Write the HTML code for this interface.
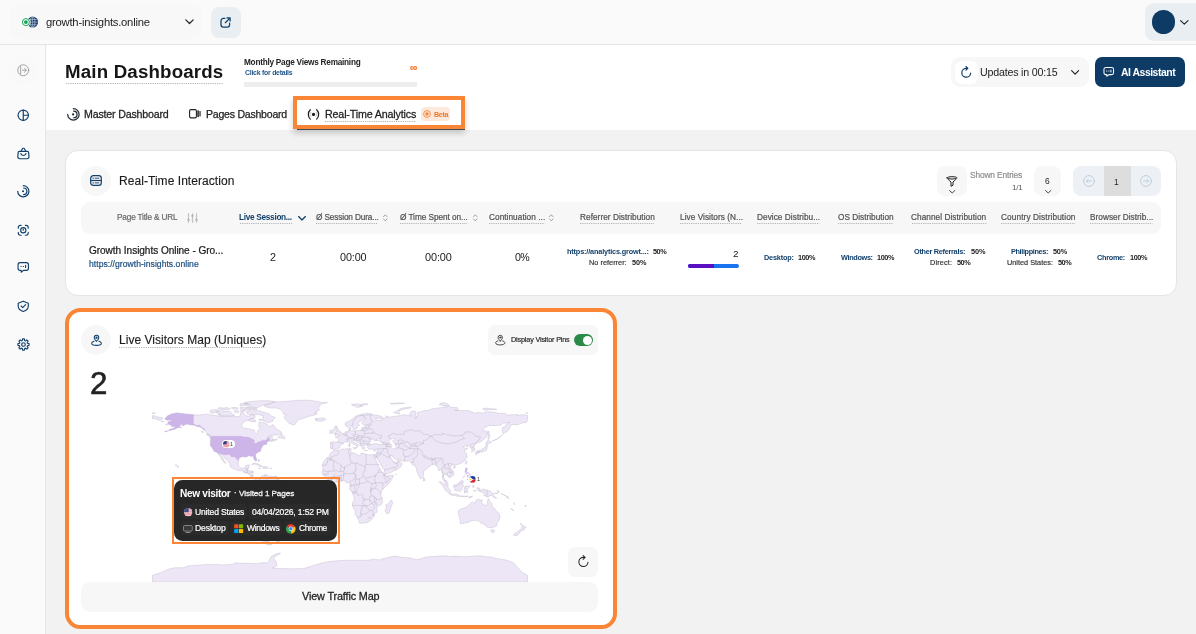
<!DOCTYPE html>
<html lang="en">
<head>
<meta charset="utf-8">
<title>Main Dashboards</title>
<style>
*{box-sizing:border-box;margin:0;padding:0}
html,body{width:1196px;height:634px;overflow:hidden;background:#f2f2f2;font-family:"Liberation Sans",sans-serif;color:#1f1f1f}
.a{position:absolute}
.t{position:absolute;white-space:nowrap;line-height:1;will-change:transform}
#topbar{left:0;top:0;width:1196px;height:44.800px;background:#fafafa;border-bottom:1px solid #e4e4e4}
#sidebar{left:0;top:44.800px;width:46px;height:590px;background:#fafafa;border-right:1px solid #e6e6e6}
#header{left:46px;top:44.800px;width:1150px;height:84.800px;background:#fff}
.card{background:#fff;border:1px solid #e5e5e5;border-radius:13px}
.circ{width:30px;height:30px;border-radius:50%;background:#f7f7f7}
.btn{border-radius:8px;background:#f7f7f7}
.dl{height:1px;background:repeating-linear-gradient(90deg,#b9b9b9 0 1.400px,transparent 1.400px 2.700px)}
svg{position:absolute;overflow:visible}
</style>
</head>
<body>
<div id="topbar" class="a"></div>
<div class="a" style="left:10px;top:5px;width:192px;height:34px;border-radius:9px;background:#f8f8f8"></div>
<svg style="left:20px;top:15px" width="20" height="14" viewBox="20 15 20 14">
<circle cx="32.650" cy="22.100" r="6.100" fill="#fff"/><circle cx="32.650" cy="22.100" r="5.500" fill="#1b4173"/>
<ellipse cx="32.650" cy="22.100" rx="2.300" ry="5.100" stroke="#dbe4ef" stroke-width=".55" fill="none"/>
<path d="M32.650 16.900v10.400M27.400 22.100h10.500M28.600 19.500h8.100M28.600 24.700h8.100" stroke="#dbe4ef" stroke-width=".5" fill="none"/>
<circle cx="25.900" cy="22.100" r="4.500" fill="#fff"/><circle cx="25.900" cy="22.100" r="3.500" fill="#fff" stroke="#12a150" stroke-width="1"/><circle cx="25.900" cy="22.100" r="1.900" fill="#12a150"/></svg>
<div class="t" id="site" style="left:45.95px;top:17.48px;font-size:11.25px;color:#222;letter-spacing:-0.231px">growth-insights.online</div>
<svg style="left:184.500px;top:19.300px" width="9" height="6" viewBox="0 0 9 6"><path d="M.8 .8l3.700 3.700L8.200 .8" stroke="#222" stroke-width="1.200" fill="none" stroke-linecap="round" stroke-linejoin="round"/></svg>
<div class="a" style="left:210.500px;top:7px;width:30.500px;height:30.500px;border-radius:8px;background:#e9eef2"></div>
<svg style="left:220px;top:16.500px" width="11" height="11" viewBox="0 0 11 11"><path d="M4.800 1.400H3.300A2.300 2.300 0 0 0 1 3.700v4A2.300 2.300 0 0 0 3.300 10h4A2.300 2.300 0 0 0 9.600 7.700V6.200M6.900 .9h3.200v3.200M9.900 1.100L5.300 5.700" stroke="#12406b" stroke-width="1.250" fill="none" stroke-linecap="round" stroke-linejoin="round"/></svg>
<div class="a" style="left:1144.500px;top:3px;width:60px;height:38px;border-radius:9px;background:#e9eef2"></div>
<div class="a" style="left:1151.500px;top:10.200px;width:23.500px;height:23.500px;border-radius:50%;background:#0d3b66"></div>
<svg style="left:1179.700px;top:19.700px" width="9" height="5" viewBox="0 0 9 5"><path d="M.6 .6l3.700 3.600L8 .6" stroke="#222" stroke-width="1.150" fill="none" stroke-linecap="round" stroke-linejoin="round"/></svg>
<div id="sidebar" class="a"></div>
<div id="header" class="a"></div>
<div class="a" style="left:8px;top:55px;width:30px;height:30px;border-radius:50%;background:#f9f9f9"></div>
<svg style="left:16.95px;top:63.95px" width="12.5" height="12.5" viewBox="0 0 24 24" fill="none" stroke="#9a9a9a" stroke-width="1.7" stroke-linecap="round" stroke-linejoin="round"><circle cx="12" cy="12" r="10.500"/><path d="M7 5v14"/><path d="M10.500 12h7M14.500 8.500L18 12l-3.500 3.500"/></svg>
<svg style="left:16.95px;top:108.65px" width="12.5" height="12.5" viewBox="0 0 24 24" fill="none" stroke="#12406b" stroke-width="2.3" stroke-linecap="round" stroke-linejoin="round"><circle cx="12" cy="12" r="10"/><path d="M12 2v20M12 12h10"/></svg>
<svg style="left:16.8px;top:146.6px" width="12.8" height="12.8" viewBox="0 0 24 24" fill="none" stroke="#12406b" stroke-width="2.2" stroke-linecap="round" stroke-linejoin="round"><path d="M4.500 8.200h15a2.300 2.300 0 0 1 2.300 2.300l.7 7.500a4 4 0 0 1-4 4h-13a4 4 0 0 1-4-4l.7-7.500a2.300 2.300 0 0 1 2.300-2.300z"/><path d="M7.500 8l3.200-5.700h2.600L16.500 8"/><path d="M7 12.300c1.200 2.400 2.900 3.600 5 3.600s3.800-1.200 5-3.600"/></svg>
<svg style="left:16.9px;top:185.1px" width="12.6" height="12.6" viewBox="0 0 24 24" fill="none" stroke="#12406b" stroke-width="2.3" stroke-linecap="round" stroke-linejoin="round"><path d="M12 1.300A10.700 10.700 0 1 1 1.300 12"/><path d="M12.500 5.700A6.300 6.300 0 0 1 12.500 18.300"/><circle cx="11.500" cy="12" r="2" fill="#12406b" stroke="none"/></svg>
<svg style="left:16.95px;top:223.55px" width="12.5" height="12.5" viewBox="0 0 24 24" fill="none" stroke="#12406b" stroke-width="2.2" stroke-linecap="round" stroke-linejoin="round"><path d="M2.500 8V6.500a4 4 0 0 1 4-4H8M16 2.500h1.500a4 4 0 0 1 4 4V8M21.500 16v1.500a4 4 0 0 1-4 4H16M8 21.500H6.500a4 4 0 0 1-4-4V16"/><circle cx="12" cy="12" r="5"/><path d="M12 9.500V12"/></svg>
<svg style="left:16.95px;top:261.45px" width="12.5" height="12.5" viewBox="0 0 24 24" fill="none" stroke="#12406b" stroke-width="2.2" stroke-linecap="round" stroke-linejoin="round"><path d="M6 3h12a4 4 0 0 1 4 4v7a4 4 0 0 1-4 4h-5.500L8 21.500V18H6a4 4 0 0 1-4-4V7a4 4 0 0 1 4-4z"/><path d="M7.500 10.500h.5M12 10.500h.5M16.500 8.500v4"/></svg>
<svg style="left:16.95px;top:299.75px" width="12.5" height="12.5" viewBox="0 0 24 24" fill="none" stroke="#12406b" stroke-width="2.2" stroke-linecap="round" stroke-linejoin="round"><path d="M12 2.300l9.700 3.900v5.300c0 5-3.700 8.800-9.700 10.500C6 20.300 2.300 16.500 2.300 11.500V6.200z"/><path d="M8 11.500l3 3 5.500-5.500"/></svg>
<svg style="left:16.7px;top:337.9px" width="13" height="13" viewBox="0 0 24 24" fill="none" stroke="#12406b" stroke-width="2.1" stroke-linecap="round" stroke-linejoin="round"><path d="M9.75 4.74L10.34 1.73L13.66 1.73L14.25 4.74L15.55 5.28L18.09 3.57L20.43 5.91L18.72 8.45L19.26 9.75L22.27 10.34L22.27 13.66L19.26 14.25L18.72 15.55L20.43 18.09L18.09 20.43L15.55 18.72L14.25 19.26L13.66 22.27L10.34 22.27L9.75 19.26L8.45 18.72L5.91 20.43L3.57 18.09L5.28 15.55L4.74 14.25L1.73 13.66L1.73 10.34L4.74 9.75L5.28 8.45L3.57 5.91L5.91 3.57L8.45 5.28Z"/><circle cx="12" cy="12" r="3.300"/></svg>
<div class="t" id="h1" style="left:65.17px;top:63.27px;font-size:18.7px;color:#161616;font-weight:700;letter-spacing:0.178px">Main Dashboards</div>
<svg style="left:65.5px;top:83px" width="157" height="1" viewBox="0 0 157 1"><path d="M0 .5H157" stroke="#b4b4b4" stroke-width="1" stroke-dasharray="1.200 1.020"/></svg>
<div class="t" id="mpv" style="left:243.81px;top:59.02px;font-size:8.24px;color:#222;font-weight:700;letter-spacing:-0.247px">Monthly Page Views Remaining</div>
<div class="t" id="cfd" style="left:245.03px;top:69.84px;font-size:6.92px;color:#23578a;font-weight:700;letter-spacing:-0.241px">Click for details</div>
<div class="t" id="inf" style="left:410.10px;top:61.71px;font-size:10.5px;color:#f5853f;font-weight:700;-webkit-text-stroke:.3px #f5853f">∞</div>
<div class="a" style="left:244.200px;top:82.300px;width:172.800px;height:4.800px;background:#eeeeee"></div>
<div class="a" style="left:951px;top:56.700px;width:138.200px;height:30.600px;border-radius:9px;background:#f7f7f7"></div>
<div class="a" style="left:955px;top:61px;width:23px;height:22.500px;border-radius:7px;background:#fff"></div>
<svg style="left:960.25px;top:65.75px" width="12.5" height="12.5" viewBox="0 0 24 24" fill="none" stroke="#12406b" stroke-width="2.3" stroke-linecap="round" stroke-linejoin="round"><path d="M20.500 13.500A8.500 8.500 0 1 1 12 4.500h2.500"/><path d="M11.500 1l3.500 3.500-3.500 3.500"/></svg>
<div class="t" id="upd" style="left:980.40px;top:66.58px;font-size:10.66px;color:#222;letter-spacing:-0.197px">Updates in 00:15</div>
<svg style="left:1070.600px;top:69.600px" width="9" height="5" viewBox="0 0 9 5"><path d="M.6 .6l3.500 3.500L7.600 .6" stroke="#222" stroke-width="1.150" fill="none" stroke-linecap="round" stroke-linejoin="round"/></svg>
<div class="a" style="left:1095.200px;top:56.700px;width:89.600px;height:30.600px;border-radius:7px;background:#0d3b66"></div>
<svg style="left:1102.65px;top:66.45px" width="11.5" height="11.5" viewBox="0 0 24 24" fill="none" stroke="#fff" stroke-width="2.1" stroke-linecap="round" stroke-linejoin="round"><path d="M6 3h12a4 4 0 0 1 4 4v7a4 4 0 0 1-4 4h-5.500L8 21.500V18H6a4 4 0 0 1-4-4V7a4 4 0 0 1 4-4z"/><path d="M7.500 10.500h.5M12 10.500h.5M16.500 8.500v4"/></svg>
<div class="t" id="ai" style="left:1120.60px;top:67.75px;font-size:10.45px;color:#fff;font-weight:700;letter-spacing:-0.482px">AI Assistant</div>
<svg style="left:66.9px;top:107.8px" width="12.8" height="12.8" viewBox="0 0 24 24" fill="none" stroke="#1d2730" stroke-width="2.3" stroke-linecap="round" stroke-linejoin="round"><path d="M12 1.300A10.700 10.700 0 1 1 1.300 12"/><path d="M12.500 5.700A6.300 6.300 0 0 1 12.500 18.300"/><circle cx="11.500" cy="12" r="2" fill="#222" stroke="none"/></svg>
<div class="t" id="tab1" style="left:83.80px;top:108.69px;font-size:10.64px;color:#222;-webkit-text-stroke:0.26px #222;letter-spacing:-0.178px">Master Dashboard</div>
<svg style="left:188.800px;top:109.300px" width="12" height="9.500" viewBox="0 0 12 9.500" fill="none" stroke="#222" stroke-width="1.100" stroke-linejoin="round"><rect x=".6" y=".6" width="6.800" height="8.300" rx="1.300"/><rect x="8.600" y="1.500" width="1.100" height="6.500" rx=".5" fill="#222" stroke-width=".5"/><rect x="10.800" y="2.300" width=".5" height="4.900" rx=".25" fill="#222" stroke-width=".5"/></svg>
<div class="t" id="tab2" style="left:205.85px;top:108.76px;font-size:10.56px;color:#222;-webkit-text-stroke:0.25px #222;letter-spacing:-0.234px">Pages Dashboard</div>
<div class="a" style="left:293px;top:96px;width:172px;height:32.800px;border:4px solid #f98535;background:#fff;box-shadow:0 4px 6px rgba(0,0,0,.2)"></div>
<div class="a" style="left:297px;top:128.800px;width:168px;height:1.100px;background:#414c55"></div>
<svg style="left:306.600px;top:108.900px" width="13.200" height="10.800" viewBox="0 0 13.200 10.800" fill="none" stroke-linecap="round"><circle cx="6.500" cy="5.400" r="1.550" fill="#151515"/><path d="M3.900 3.300a3.400 3.400 0 0 0 0 4.200M9.100 3.300a3.400 3.400 0 0 1 0 4.200" stroke="#c2c2c2" stroke-width=".9"/><path d="M3.300 .7a6.600 6.600 0 0 0 0 9.400M9.700 .7a6.600 6.600 0 0 1 0 9.400" stroke="#222" stroke-width="1.250"/></svg>
<div class="t" id="tab3" style="left:324.80px;top:108.64px;font-size:10.7px;color:#222;-webkit-text-stroke:0.26px #222;letter-spacing:-0.152px">Real-Time Analytics</div>
<svg style="left:325px;top:121.2px" width="90.6" height="1" viewBox="0 0 90.6 1"><path d="M0 .5H90.6" stroke="#b4b4b4" stroke-width="1" stroke-dasharray="1.200 1.020"/></svg>
<div class="a" style="left:420.800px;top:107px;width:29.700px;height:13.600px;border-radius:4px;background:#fde9db"></div>
<svg style="left:422.800px;top:110.200px" width="8" height="8" viewBox="0 0 8 8"><circle cx="4" cy="4" r="3.400" fill="none" stroke="#f5853f" stroke-width=".9"/><circle cx="4" cy="4" r="1.700" fill="#f5853f"/></svg>
<div class="t" id="beta" style="left:433.73px;top:111.83px;font-size:7.17px;color:#f07a2c;font-weight:700;letter-spacing:-0.303px">Beta</div>
<div class="a card" style="left:65px;top:150px;width:1112px;height:146px"></div>
<div class="a circ" style="left:81.400px;top:166px"></div>
<svg style="left:90.100px;top:174.900px" width="12" height="11" viewBox="0 0 12 11" fill="none" stroke="#12406b" stroke-width="1.200"><rect x=".7" y=".7" width="10.600" height="9.600" rx="2.600"/><path d="M.7 5.500h10.600"/><path d="M2.800 3.200h1M2.800 7.900h1M5.300 3.200h3.500M5.300 7.900h3.500" stroke-width=".9" stroke-linecap="round"/></svg>
<div class="t" id="c1t" style="left:118.50px;top:174.84px;font-size:12px;color:#1c1c1c;-webkit-text-stroke:0.14px #1c1c1c;letter-spacing:0.053px">Real-Time Interaction</div>
<div class="a btn" style="left:936.600px;top:166.200px;width:30.200px;height:30px"></div>
<svg style="left:946px;top:175.500px" width="12" height="11" viewBox="0 0 12 11" fill="none" stroke="#222" stroke-width="1" stroke-linejoin="round" stroke-linecap="round"><path d="M1 1.800C1 1.200 3.200 .7 6 .7s5 .5 5 1.100c0 .5-.6 1.200-4 4.200v3.200L5 10.300V6C1.600 3 1 2.300 1 1.800z"/><path d="M2.500 2.600c2 .6 5 .6 7 0"/></svg>
<svg style="left:948.800px;top:189.800px" width="6.400" height="3.600" viewBox="0 0 6.400 3.600"><path d="M.5 .5l2.700 2.500L5.900 .5" stroke="#333" stroke-width=".9" fill="none" stroke-linecap="round" stroke-linejoin="round"/></svg>
<div class="t" id="se" style="left:969.92px;top:171.21px;font-size:8.38px;color:#8f8f8f;-webkit-text-stroke:0.20px #8f8f8f;letter-spacing:-0.152px">Shown Entries</div>
<div class="t" id="se2" style="left:1012.20px;top:184.03px;font-size:8px;color:#555;letter-spacing:-0.224px">1/1</div>
<div class="a btn" style="left:1034.200px;top:166.200px;width:27px;height:30px"></div>
<div class="t" id="six" style="left:1044.89px;top:177.09px;font-size:8.4px;color:#222">6</div>
<svg style="left:1044.800px;top:189.800px" width="6.400" height="3.600" viewBox="0 0 6.400 3.600"><path d="M.5 .5l2.700 2.500L5.900 .5" stroke="#333" stroke-width=".9" fill="none" stroke-linecap="round" stroke-linejoin="round"/></svg>
<div class="a" style="left:1073px;top:166.200px;width:88.200px;height:30px;border-radius:8px;background:#edf1f5;overflow:hidden"><div class="a" style="left:31px;top:0;width:26.500px;height:30px;background:#dddddd"></div></div>
<svg style="left:1082.500px;top:175.200px" width="12" height="12" viewBox="0 0 12 12" fill="none" stroke="#b9c9d8" stroke-width=".9" stroke-linecap="round" stroke-linejoin="round"><circle cx="6" cy="6" r="5.400"/><path d="M8.500 6h-5M5.300 4.200L3.500 6l1.800 1.800"/></svg>
<svg style="left:1140.200px;top:175.200px" width="12" height="12" viewBox="0 0 12 12" fill="none" stroke="#b9c9d8" stroke-width=".9" stroke-linecap="round" stroke-linejoin="round"><circle cx="6" cy="6" r="5.400"/><path d="M3.500 6h5M6.700 4.200L8.500 6 6.700 7.800"/></svg>
<div class="t" id="pg1" style="left:1114.01px;top:178.49px;font-size:8.4px;color:#222">1</div>
<div class="a" style="left:81.300px;top:202px;width:1080px;height:31.800px;border-radius:9px;background:#f7f7f7"></div>
<div class="t" id="h_pt" style="left:117.10px;top:213.52px;font-size:8.25px;color:#6a6a6a;-webkit-text-stroke:0.20px #6a6a6a;letter-spacing:-0.178px">Page Title &amp; URL</div>
<svg style="left:186.600px;top:213px" width="11" height="10" viewBox="0 0 11 10" stroke="#c2c2c2" stroke-width="1.150" fill="none"><path d="M1.500 .3v9.400M5.500 .3v9.400M9.500 .3v9.400"/><path d="M.2 6.800h2.600M4.200 2.800h2.600M8.200 6.800h2.600" stroke="#b0b0b0" stroke-width="1.200"/></svg>
<div class="t" id="h_ls" style="left:239.29px;top:213.52px;font-size:8.25px;color:#12406b;font-weight:700;letter-spacing:-0.298px">Live Session...</div>
<svg style="left:239.8px;top:223.200px" width="52.2" height="1" viewBox="0 0 52.2 1"><path d="M0 .5H52.2" stroke="#b4b4b4" stroke-width="1" stroke-dasharray="1.200 1.020"/></svg>
<svg style="left:298.200px;top:215.600px" width="8" height="4.600" viewBox="0 0 8 4.600"><path d="M.6 .6l3.400 3.300L7.400 .6" stroke="#12406b" stroke-width="1.350" fill="none" stroke-linecap="round" stroke-linejoin="round"/></svg>
<div class="t" id="h_sd" style="left:315.93px;top:213.52px;font-size:8.25px;color:#505050;-webkit-text-stroke:0.20px #505050;letter-spacing:-0.142px">Ø Session Dura...</div>
<svg style="left:316.3px;top:223.200px" width="62.2" height="1" viewBox="0 0 62.2 1"><path d="M0 .5H62.2" stroke="#b4b4b4" stroke-width="1" stroke-dasharray="1.200 1.020"/></svg>
<svg style="left:383.4px;top:213.800px" width="4.600" height="7.600" viewBox="0 0 4.600 7.600"><path d="M.5 2.700L2.300 .8l1.800 1.900M.5 4.900l1.800 1.900 1.800-1.900" stroke="#7a7a7a" stroke-width=".7" fill="none" stroke-linecap="round" stroke-linejoin="round"/></svg>
<div class="t" id="h_ts" style="left:399.51px;top:213.52px;font-size:8.25px;color:#505050;-webkit-text-stroke:0.20px #505050;letter-spacing:-0.060px">Ø Time Spent on...</div>
<svg style="left:399.6px;top:223.200px" width="67.2" height="1" viewBox="0 0 67.2 1"><path d="M0 .5H67.2" stroke="#b4b4b4" stroke-width="1" stroke-dasharray="1.200 1.020"/></svg>
<svg style="left:472.9px;top:213.800px" width="4.600" height="7.600" viewBox="0 0 4.600 7.600"><path d="M.5 2.700L2.300 .8l1.800 1.900M.5 4.900l1.800 1.900 1.800-1.900" stroke="#7a7a7a" stroke-width=".7" fill="none" stroke-linecap="round" stroke-linejoin="round"/></svg>
<div class="t" id="h_co" style="left:489.13px;top:213.52px;font-size:8.25px;color:#505050;-webkit-text-stroke:0.20px #505050;letter-spacing:0.045px">Continuation ...</div>
<svg style="left:488.9px;top:223.200px" width="55.6" height="1" viewBox="0 0 55.6 1"><path d="M0 .5H55.6" stroke="#b4b4b4" stroke-width="1" stroke-dasharray="1.200 1.020"/></svg>
<svg style="left:549.2px;top:213.800px" width="4.600" height="7.600" viewBox="0 0 4.600 7.600"><path d="M.5 2.700L2.300 .8l1.800 1.900M.5 4.900l1.800 1.900 1.800-1.900" stroke="#7a7a7a" stroke-width=".7" fill="none" stroke-linecap="round" stroke-linejoin="round"/></svg>
<div class="t" id="h_rd" style="left:579.65px;top:213.52px;font-size:8.25px;color:#505050;-webkit-text-stroke:0.20px #505050;letter-spacing:0.046px">Referrer Distribution</div>
<svg style="left:579.6px;top:223.200px" width="74" height="1" viewBox="0 0 74 1"><path d="M0 .5H74" stroke="#b4b4b4" stroke-width="1" stroke-dasharray="1.200 1.020"/></svg>
<div class="t" id="h_lv" style="left:680.44px;top:213.52px;font-size:8.25px;color:#505050;-webkit-text-stroke:0.20px #505050;letter-spacing:0.047px">Live Visitors (N...</div>
<svg style="left:680.4px;top:223.200px" width="62.2" height="1" viewBox="0 0 62.2 1"><path d="M0 .5H62.2" stroke="#b4b4b4" stroke-width="1" stroke-dasharray="1.200 1.020"/></svg>
<div class="t" id="h_dd" style="left:756.61px;top:213.52px;font-size:8.25px;color:#505050;-webkit-text-stroke:0.20px #505050;letter-spacing:0.045px">Device Distribu...</div>
<svg style="left:757.2px;top:223.200px" width="62.4" height="1" viewBox="0 0 62.4 1"><path d="M0 .5H62.4" stroke="#b4b4b4" stroke-width="1" stroke-dasharray="1.200 1.020"/></svg>
<div class="t" id="h_os" style="left:837.96px;top:213.52px;font-size:8.25px;color:#505050;-webkit-text-stroke:0.20px #505050;letter-spacing:0.011px">OS Distribution</div>
<svg style="left:838.1px;top:223.200px" width="55.4" height="1" viewBox="0 0 55.4 1"><path d="M0 .5H55.4" stroke="#b4b4b4" stroke-width="1" stroke-dasharray="1.200 1.020"/></svg>
<div class="t" id="h_ch" style="left:911.08px;top:213.52px;font-size:8.25px;color:#505050;-webkit-text-stroke:0.20px #505050;letter-spacing:0.045px">Channel Distribution</div>
<svg style="left:911.5px;top:223.200px" width="74.8" height="1" viewBox="0 0 74.8 1"><path d="M0 .5H74.8" stroke="#b4b4b4" stroke-width="1" stroke-dasharray="1.200 1.020"/></svg>
<div class="t" id="h_cd" style="left:1000.96px;top:213.52px;font-size:8.25px;color:#505050;-webkit-text-stroke:0.20px #505050;letter-spacing:0.106px">Country Distribution</div>
<svg style="left:1001.3px;top:223.200px" width="74" height="1" viewBox="0 0 74 1"><path d="M0 .5H74" stroke="#b4b4b4" stroke-width="1" stroke-dasharray="1.200 1.020"/></svg>
<div class="t" id="h_bd" style="left:1089.59px;top:213.52px;font-size:8.25px;color:#505050;-webkit-text-stroke:0.20px #505050;letter-spacing:0.026px">Browser Distrib...</div>
<svg style="left:1089.6px;top:223.200px" width="62.4" height="1" viewBox="0 0 62.4 1"><path d="M0 .5H62.4" stroke="#b4b4b4" stroke-width="1" stroke-dasharray="1.200 1.020"/></svg>
<div class="t" id="d_t" style="left:88.92px;top:246.38px;font-size:10.07px;color:#1c1c1c;-webkit-text-stroke:0.24px #1c1c1c;letter-spacing:-0.051px">Growth Insights Online - Gro...</div>
<div class="t" id="d_u" style="left:88.87px;top:259.93px;font-size:8.59px;color:#1d4f80;-webkit-text-stroke:0.21px #1d4f80;letter-spacing:0.033px">https://growth-insights.online</div>
<div class="t" id="d_2" style="left:270.11px;top:251.86px;font-size:10.8px;color:#222">2</div>
<div class="t" id="d_a" style="left:339.69px;top:251.82px;font-size:10.84px;color:#222;letter-spacing:-0.113px">00:00</div>
<div class="t" id="d_b" style="left:425.19px;top:251.79px;font-size:10.88px;color:#222;letter-spacing:-0.093px">00:00</div>
<div class="t" id="d_c" style="left:515.25px;top:252.03px;font-size:10.6px;color:#222;letter-spacing:-0.550px">0%</div>
<div class="t" id="r1l" style="left:567.47px;top:248.22px;font-size:7.3px;color:#12406b;font-weight:700;letter-spacing:-0.158px">https://analytics.growt...:</div>
<div class="t" id="r1v" style="left:653.25px;top:248.22px;font-size:7.3px;color:#222;font-weight:700;letter-spacing:-0.467px">50%</div>
<div class="t" id="r2l" style="left:588.95px;top:259.12px;font-size:7.3px;color:#333;-webkit-text-stroke:0.18px #333;letter-spacing:0.029px">No referrer:</div>
<div class="t" id="r2v" style="left:632.07px;top:259.12px;font-size:7.3px;color:#222;font-weight:700;letter-spacing:-0.110px">50%</div>
<div class="t" id="lv2" style="left:733.23px;top:248.82px;font-size:9.9px;color:#222">2</div>
<div class="a" style="left:688px;top:264px;width:51px;height:4px;border-radius:2px;background:#1a73f0;overflow:hidden"><div class="a" style="left:0;top:0;width:25.800px;height:4px;background:#5a10c2"></div></div>
<div class="t" id="dvl" style="left:763.67px;top:253.52px;font-size:7.3px;color:#12406b;font-weight:700;letter-spacing:-0.189px">Desktop:</div>
<div class="t" id="dvv" style="left:798.18px;top:253.52px;font-size:7.3px;color:#222;font-weight:700;letter-spacing:-0.378px">100%</div>
<div class="t" id="osl" style="left:840.50px;top:253.52px;font-size:7.3px;color:#12406b;font-weight:700;letter-spacing:-0.334px">Windows:</div>
<div class="t" id="osv" style="left:876.68px;top:253.52px;font-size:7.3px;color:#222;font-weight:700;letter-spacing:-0.378px">100%</div>
<div class="t" id="c1l" style="left:914.34px;top:248.22px;font-size:7.3px;color:#12406b;font-weight:700;letter-spacing:-0.281px">Other Referrals:</div>
<div class="t" id="c1v" style="left:971.07px;top:248.22px;font-size:7.3px;color:#222;font-weight:700;letter-spacing:-0.058px">50%</div>
<div class="t" id="c2l" style="left:929.56px;top:259.12px;font-size:7.3px;color:#333;-webkit-text-stroke:0.18px #333;letter-spacing:0.157px">Direct:</div>
<div class="t" id="c2v" style="left:956.62px;top:259.12px;font-size:7.3px;color:#222;font-weight:700;letter-spacing:-0.481px">50%</div>
<div class="t" id="k1l" style="left:1011.11px;top:248.22px;font-size:7.3px;color:#12406b;font-weight:700;letter-spacing:-0.359px">Philippines:</div>
<div class="t" id="k1v" style="left:1053.18px;top:248.22px;font-size:7.3px;color:#222;font-weight:700;letter-spacing:-0.188px">50%</div>
<div class="t" id="k2l" style="left:1007.33px;top:259.12px;font-size:7.3px;color:#333;-webkit-text-stroke:0.18px #333;letter-spacing:0.010px">United States:</div>
<div class="t" id="k2v" style="left:1057.62px;top:259.12px;font-size:7.3px;color:#222;font-weight:700;letter-spacing:-0.481px">50%</div>
<div class="t" id="brl" style="left:1097.35px;top:253.52px;font-size:7.3px;color:#12406b;font-weight:700;letter-spacing:-0.287px">Chrome:</div>
<div class="t" id="brv" style="left:1130.18px;top:253.52px;font-size:7.3px;color:#222;font-weight:700;letter-spacing:-0.401px">100%</div>
<div class="a" style="left:65px;top:308px;width:552.300px;height:321px;border:4px solid #f98535;border-radius:15.500px;background:#fff"></div>
<div class="a circ" style="left:81.400px;top:325.100px"></div>
<svg style="left:89.9px;top:333.6px" width="13" height="13" viewBox="0 0 24 24" fill="none" stroke="#12406b" stroke-width="1.9" stroke-linecap="round" stroke-linejoin="round"><path d="M12 13.500c2.800-2.700 4.200-4.900 4.200-6.800A4.200 4.200 0 0 0 7.800 6.700c0 1.900 1.400 4.100 4.200 6.800z"/><circle cx="12" cy="6.800" r="1.200"/><path d="M7.500 13.300C4.800 14 3 15.300 3 16.900 3 19.200 7 21 12 21s9-1.800 9-4.100c0-1.600-1.800-2.900-4.500-3.600"/></svg>
<div class="t" id="c2t" style="left:118.50px;top:333.54px;font-size:12px;color:#1c1c1c;-webkit-text-stroke:0.14px #1c1c1c;letter-spacing:0.030px">Live Visitors Map (Uniques)</div>
<svg style="left:119.4px;top:346.6px" width="145.8" height="1" viewBox="0 0 145.8 1"><path d="M0 .5H145.8" stroke="#b4b4b4" stroke-width="1" stroke-dasharray="1.200 1.020"/></svg>
<div class="a" style="left:488.200px;top:325.100px;width:110.300px;height:30px;border-radius:7px;background:#f7f7f7"></div>
<svg style="left:493.65px;top:333.75px" width="12.5" height="12.5" viewBox="0 0 24 24" fill="none" stroke="#333" stroke-width="1.7" stroke-linecap="round" stroke-linejoin="round"><path d="M12 13.500c2.800-2.700 4.200-4.900 4.200-6.800A4.200 4.200 0 0 0 7.800 6.700c0 1.900 1.400 4.100 4.200 6.800z"/><circle cx="12" cy="6.800" r="1.200"/><path d="M7.500 13.300C4.800 14 3 15.300 3 16.900 3 19.200 7 21 12 21s9-1.800 9-4.100c0-1.600-1.800-2.900-4.500-3.600"/></svg>
<div class="t" id="dvp" style="left:511.06px;top:336.28px;font-size:7.23px;color:#222;-webkit-text-stroke:0.17px #222;letter-spacing:-0.155px">Display Visitor Pins</div>
<div class="a" style="left:573.800px;top:334.300px;width:19.400px;height:11.600px;border-radius:6px;background:#2a8a47"><div class="a" style="left:9px;top:1.300px;width:9px;height:9px;border-radius:50%;background:#fff"></div></div>
<div class="t" id="big2" style="left:89.74px;top:367.50px;font-size:31.3px;color:#222;-webkit-text-stroke:.6px #222">2</div>
<svg class="map" style="left:151.5px;top:398.5px;overflow:hidden" width="376" height="183.5" viewBox="0 0 376 183.5"><path d="M13 20.1L15.1 17.2L19.2 15.2L25 14.0L31.7 14.9L41.1 15.8L47.4 16.1L54.7 15.2L58.8 16.0L68.2 17.3L75.5 17.5L82.8 17.7L88 17.3L88.5 13.8L91.1 13.5L93.7 16.4L96.3 17.3L99.5 15.7L103.1 16.6L102.6 19.2L98.4 19.5L96.9 21.4L93.2 22.2L90.1 24.8L89.5 27.0L91.6 28.9L96.3 29.7L99.5 30.7L102.4 30.9L102.3 33.1L104.1 34.9L105.7 34.3L105.7 31.5L108 29.4L106.4 27.2L107.3 25.3L106.7 23.3L110.9 23.4L114.6 24.8L115.6 26.8L117.7 27.6L119.8 26.3L120.8 25.5L122.9 27.9L125 30.5L128.1 32.0L129.9 33.8L127.1 35.0L125.5 36.0L119.2 36.0L115.6 38.5L118.2 37.3L120.8 37.3L119.8 38.5L120.8 40.1L123.9 40.6L125.5 39.5L124.5 41.1L121.3 42.0L119.2 42.9L119.5 41.6L120.8 40.9L118.2 41.4L116.1 42.3L114.6 43.2L114.2 44.5L115.1 44.9L113.5 45.2L110.9 46.0L110.6 47.2L109.4 48.7L108.8 49.8L109 51.3L107.8 52.4L106.2 53.1L103.8 54.8L103.2 56.5L104.1 59.1L104.7 60.7L104.1 62.0L102.8 61.2L101.7 59.3L101.9 58.1L100.5 57.0L98.9 57.3L97.4 56.6L95.3 56.7L95 57.9L93.2 57.8L90.3 57.4L89 57.9L86.7 59.3L86.7 61.4L86.1 64.9L86.7 66.9L88 68.5L89.6 69.3L92.2 68.9L93.5 68.0L93.9 66.4L97.4 65.9L96.9 68.0L96.3 69.5L95.5 71.7L98.4 71.8L101.3 72.7L100.8 75.3L100.8 76.8L102.1 78.7L103.6 79.1L105.2 78.3L107.4 79.3L107 80.7L106.2 79.7L104.9 79.4L104.4 80.7L102.8 80.2L101.5 79.7L100.8 78.9L98.6 77.9L98.6 76.6L96.9 74.8L95.8 74.5L92.7 73.7L90.1 71.5L87.5 71.9L83.8 70.6L80.2 69.2L78.1 67.5L78.1 64.9L75.5 61.7L73.4 59.9L70.8 57.3L70.1 55.7L68.4 55.2L68.6 57.0L70.5 59.1L71.9 61.2L73.1 63.1L73.9 64.2L73.2 64.3L71.1 62.5L71.1 61.0L69 60.0L69.2 58.6L67.4 56.8L66 54.4L64.6 52.9L62.5 52.4L61.1 50.3L60.4 48.9L59 47.2L58.5 46.2L58.6 44.0L58.8 40.2L58.1 37.9L60.4 38.8L60.1 37.3L58 36.2L55.2 35.2L54.1 33.1L52.4 31.4L51 30.0L48.9 28.1L46.8 27.4L44.8 27.2L42.2 26.0L38 25.7L35.9 24.9L33.3 25.3L32.3 26.1L30.2 26.5L31.2 24.8L29.1 25.3L28.1 26.5L27.1 27.9L25 28.9L22.9 30.0L20.3 30.7L16.6 31.5L18.7 30.2L21.3 29.4L23.9 27.9L24.1 27.0L22.4 27.4L19.5 27.2L19.2 25.8L16.6 25.3L15.6 24.2L16.6 22.7L20.3 22.0L20.3 21.1L18.2 21.0L14.6 21.0L13 20.1Z M107.4 79.3L108.8 78.4L109.4 77.0L110.9 76.6L112.5 76.0L113.5 75.4L113.7 76.8L115.1 76.0L116.9 77.2L119.2 77.3L121.3 77.6L123.4 77.2L125 78.9L126.5 80.0L128.6 82.0L131.7 82.3L134.4 83.6L135.9 86.4L135.4 88.3L137.5 88.8L138 89.3L141.6 91.2L144.8 91.3L147.4 91.9L149.5 93.3L151.2 93.8L151.7 96.1L151 98.2L149.1 100.3L147.6 101.8L147.4 104.4L147.2 106.8L146.3 109.1L145.3 111.2L144.2 112.3L141.6 112.6L139.6 113.6L137.7 115.2L137.3 118.0L135.6 120.1L133.6 121.8L132.3 123.7L130.7 124.7L129.1 124.6L127.2 123.7L128.4 125.3L128.6 126.6L127.6 128.4L123.4 128.9L123.1 131.0L120.3 131.0L121.6 132.6L120 133.6L119.8 135.2L117.7 136.5L119.5 138.1L117.7 139.9L116.1 141.4L116.7 142.9L117 143.8L120.1 145.3L118.2 145.9L115.6 145.8L113 144.6L110.4 142.5L109.4 138.8L110.4 136.2L112 132.1L111.1 129.4L111.4 126.8L112.5 124.8L113.5 122.7L113.5 118.5L114.6 114.3L114.9 109.1L114.7 107.4L113 106.0L110.4 104.7L108.6 102.9L107.6 100.8L106.4 98.7L105.7 96.6L104.1 95.1L103.3 94.0L103.3 92.8L104.7 91.7L103.7 90.6L104.1 88.8L104.7 87.8L105.8 86.7L106.5 85.5L107.5 84.1L107.3 82.6L107.3 81.0L107.4 79.3Z M181.9 51.0L184.9 51.5L185.9 51.6L188 50.9L189 50.3L191.1 49.9L193.2 50.0L196.3 49.8L198.4 49.4L199.5 50.0L198.9 51.3L198.6 52.9L199.7 53.7L201.5 54.0L203.6 54.7L205.7 56.0L207.8 56.7L208.8 56.0L209 54.4L210.6 54.0L212 54.3L214 55.4L216.6 55.8L218.2 56.1L220.3 55.5L221.6 55.7L222 57.0L223 59.1L223.9 61.2L225 63.3L226.3 65.4L226.8 66.4L226.9 68.7L228.1 69.5L229.1 72.2L230.7 73.2L232.8 75.2L233.1 76.3L233.8 77.4L237 76.6L239 76.5L241.3 76.0L240.9 78.4L239.4 81.0L238 83.1L235.9 85.7L233.3 87.8L232.3 88.8L230.7 90.4L229.9 91.4L229.1 93.2L228.4 95.1L229.1 97.2L230.2 99.2L230.3 101.3L230.3 103.4L229.5 105.3L227.1 106.5L224.5 109.1L225 111.2L225 113.1L222.4 114.9L222.2 117.5L220.3 119.6L218.7 121.1L217.2 122.7L214.6 123.7L211.4 123.9L208.8 124.6L207.2 123.9L206.8 121.6L205.2 118.1L203.6 115.9L203.1 111.7L201.8 109.7L200.5 107.1L200.3 105.0L201 102.9L202.1 101.3L202.3 99.2L201.8 97.7L200.7 94.6L200.3 93.0L198.4 91.2L197.7 89.9L197.9 87.3L198.1 84.3L196.9 83.6L195.3 83.7L194.3 83.8L192.7 81.7L190.6 81.7L189 82.3L185.9 83.3L183.8 82.9L180.2 83.7L178.6 83.1L176.7 81.5L175 80.5L174.1 79.4L173.7 78.4L172.4 76.8L170.5 75.3L170.6 74.2L169.8 73.0L170.8 71.6L171 70.1L170.8 68.0L170.3 66.4L171.3 63.6L172.9 61.0L174.5 59.3L176.3 58.3L177.6 57.6L177.8 55.5L179.1 53.6L180.9 52.9L181.9 51Z M239.4 100.8L240.3 102.9L240.6 104.4L239.6 106.5L238.5 109.7L237.1 114.2L235.1 114.9L233.5 112.8L233.1 110.7L234.4 108.6L233.8 106.0L236.4 104.7L238 102.4Z M182.2 50.8L181.4 50.1L180.3 49.5L178.7 49.8L178.8 48.4L178.1 48.0L178.8 45.6L178.4 43.5L179.7 42.8L183.8 43.1L186.1 43.1L186.7 41.7L186.7 40.4L185.7 39.1L183.1 38.0L184.9 37.5L186.3 37.7L186.1 36.5L188.2 36.7L189.6 36.0L190.6 35.1L191.6 34.7L192.7 33.6L193.2 32.8L195.3 32.6L196.9 32.0L197 30.5L196.5 28.9L198.9 28.2L198.9 29.8L198.2 31.0L199.3 32.0L201 31.6L202.8 32.2L204.7 31.7L207.3 31.3L208.6 31.6L209.9 30.8L209.9 28.9L210.9 28.2L213.2 28.7L213.3 27.6L212.5 26.6L214 26.3L217.2 26.2L219.5 25.9L217.7 25.3L214 25.6L211.4 25.8L210.2 24.8L210.4 22.7L213.5 20.8L214.4 20.0L213 19.8L210.9 20.1L210.2 21.3L207.8 22.5L206 24.0L205.9 25.1L207.6 26.0L207 26.6L205.3 27.4L205.1 29.2L204.4 29.9L202.9 30.4L201.4 30.6L201.2 29.8L200.3 28.2L199.7 26.8L199 26.2L197.9 26.9L195.3 27.9L193.7 26.8L193.2 24.8L193.4 23.5L196.9 22.2L198.9 21.1L201 19.5L203.1 17.5L205.7 16.4L208.8 15.4L212.5 14.7L214.9 14.2L217.7 14.5L220.3 15.1L220.1 15.6L222.9 16.1L225.5 16.3L230.2 17.7L230.9 18.8L228.1 19.4L223.9 18.9L224.3 20.6L224.4 21.2L227.1 21.7L227.6 21.1L230.2 21.0L229.9 19.9L232.3 19.1L234 19.2L234 18.0L233.6 16.9L236.4 17.5L236.4 18.7L238.5 17.9L243.2 17.2L244.3 17.2L248.4 16.5L251 15.7L255.2 16.1L259.4 17.2L257.8 15.9L257.6 14.3L259.1 12.5L260.9 11.9L263.8 12.6L263.3 14.3L264 16.9L264.6 18.7L262.5 19.2L265.1 18.0L265.9 16.4L264.9 14.3L266.1 12.8L268.7 13.0L271.9 11.7L278.1 11.2L278.6 10.2L284.9 9.1L290.6 8.6L296.3 7.4L299.5 8.4L305.2 8.6L306.2 11.2L302.6 11.4L305.7 11.5L310.9 11.7L316.1 11.5L320.3 13.0L322.9 14.3L326 13.6L331.2 14.0L333.3 13.0L334.9 12.6L340.1 13.0L344.3 13.8L347.4 14.4L353.6 14.5L354.7 15.7L356.2 16.0L362.5 15.7L365.6 15.4L365.6 16.6L370.3 15.6L375.5 16.4L375.5 20.6L374.5 23.4L371.3 23.7L368.2 24.8L365.1 25.8L362 25.5L359.9 25.8L358.1 27.4L357.3 30.0L356.2 31.2L354.7 33.1L353.1 33.3L351.2 35.2L350.5 32.0L350 28.9L352.6 27.4L354.7 25.3L357.8 23.2L354.7 23.9L351 24.2L348.9 26.3L345.1 26.3L342.7 26.5L336.4 26.5L331.8 29.4L331.2 31.7L334.4 32.3L335.2 33.9L334.4 36.2L334.2 37.8L332.3 39.9L329.2 42.5L326.5 43.7L325.3 43.3L324.2 44.2L323.1 45.3L322.9 46.6L320.8 47.2L321.8 48.2L322.8 49.8L322.8 51.3L321.9 51.8L319.8 52.4L319.8 50.8L320.1 49.2L318.2 48.9L318.5 47.2L317.5 46.6L314.9 47.7L314.6 45.8L312 47.5L310.6 47.9L311.8 49.2L313.8 48.9L315.6 49.4L315.4 50.0L312.3 51.8L313.5 53.4L314.9 55.2L315 56.2L314 57.0L315.1 57.3L314.6 58.8L313.2 60.7L312.5 61.9L310.9 62.9L309.6 64.0L307 65.1L303.6 66.0L302.9 67.2L302.4 65.9L300.5 65.9L299.1 66.7L298.2 68.5L300 71.1L301.5 72.7L301.9 75.8L300 77.4L299.1 77.5L297.6 79.2L297.2 77.9L295.8 77.4L294.6 75.6L293.1 75.1L292.7 74.2L292.2 75.3L291.4 77.4L292.4 79.4L293.2 81.2L294.5 81.8L295.7 83.6L295.8 85.4L296.5 86.8L295.7 86.7L293.5 85.3L292.6 82.6L290.4 79.8L290.4 77.4L290.8 75.8L289.9 73.2L289.7 71.1L288 70.8L287.3 71.8L286.2 71.4L286.2 68.7L284.1 66.4L283.6 65.0L282.1 65.4L280.5 65.7L278.6 66.0L277.9 67.5L276.8 68.0L273.7 70.8L271.5 72.2L271.6 74.5L271.1 77.6L270.3 78.6L269.5 79.0L268.7 79.9L267.5 78.0L266.1 75.3L264.9 72.2L263.8 68.5L263.7 66.2L263.2 66.1L261.4 66.6L259.9 65.1L261.2 64.3L259 63.6L257.8 62.5L257.3 61.8L252.6 62.2L247.9 61.6L247.2 60.1L244.8 60.6L242.7 59.7L240.9 57.9L240.3 56.8L238.8 56.7L238 57.5L238.8 59.3L240.3 60.5L240.3 61.7L241.3 62.6L241.6 63.0L244.6 63.1L246.6 61.0L247 62.8L249.1 63.7L250.3 64.9L248.9 67.0L248.1 68.5L245.3 70.4L242.4 71.6L238.7 73.7L234.9 75.0L233.3 75.1L232.6 72.9L232.4 71.1L230.5 68.5L228.8 65.9L227.9 63.5L226.5 61.7L224.7 59.1L224.4 57.6L223.6 59.4L222 57.0L221.6 55.7L223.6 55.7L224.5 54.1L225.1 52.4L225.4 50.8L225.7 50.1L223.9 50.1L221.9 50.7L219.9 50.0L218.4 50.5L216.5 49.8L215.4 48.4L215.8 47.3L215.3 46.6L216.6 46.2L218.2 46.1L218.3 45.4L220.8 45.3L222.9 44.5L224.7 44.5L226 45.3L228.1 45.7L231.2 45.1L231.2 43.8L229.4 43.0L226.5 41.6L226.9 41.1L227.9 40.2L228.9 39.2L227.6 39.2L224.7 40.1L226 41.2L225 41.3L223 42.0L221.9 41.0L223 40.4L220.8 39.9L220 39.9L218.9 41.1L217.8 42.7L217.1 43.8L217.2 44.8L218.2 45.4L216.6 45.6L215.4 46.0L215.1 45.8L213.4 45.7L212.7 46.6L211.8 46.1L211.5 47.2L212.3 47.9L213 48.7L212.2 49.2L212 50.3L211.2 50.3L210.6 50.0L210.1 48.9L210.2 48.3L209.4 47.4L208.3 46.1L208.2 45.1L207.8 44.3L206.2 43.5L204.1 42.5L203.1 41.2L202.4 41.6L202.2 40.7L200.8 41.1L200.8 42.2L202.2 43.0L203.1 44.2L204.7 44.7L207.3 46.4L205.7 46.1L205.2 46.8L205.8 47.7L204.8 48.7L204.4 48.5L204.9 47.5L204.3 46.5L202.9 45.8L200.8 44.8L198.9 43.6L198.6 42.6L197.2 42.0L195.8 42.7L193.6 43.2L192.2 43.0L191.1 43.5L191.3 44.7L190.3 45.2L188.6 46.0L187.7 47.2L188.2 47.9L187.3 49.0L185.7 50.0L183.4 50.1Z M0.5 16.4L3.6 17.2L5.7 18.0L9.9 18.7L11.2 19.5L8.3 21.3L5.2 20.8L2.6 19.5L0.5 20.1Z M182.1 36.1L184.4 35.9L187 35.5L189.4 35.0L188.8 34.5L189.8 33.4L188.3 33.1L187.8 32.0L186.4 31.0L185.9 30.0L184.7 29.9L185.9 28.3L183.8 28.2L184.7 27.3L182.8 27.3L182 28.4L182.3 30.0L183 31.0L184.7 31.1L184.9 32.6L183.3 32.8L183.6 33.6L182.6 34.3L184.9 34.7L183.3 35.1Z M181.5 33.9L181.7 32.6L182 31.2L180.2 30.7L179.1 31.5L177.6 31.8L178.1 32.9L177.3 34.1L178.1 34.7L179.7 34.3Z M164.6 21.8L167.2 22.2L169.2 22.3L172.4 21.3L173.8 20.6L172.6 19.3L170.8 19.0L168.7 19.4L166.6 19.5L164.6 19.1L163 20.1L165.1 20.6L163 20.8L165.1 21.3Z M201 48.7L204.3 48.5L203.7 50.1L201 49.1Z M196.6 45.6L198.1 45.6L198 47.5L196.9 47.7L196.8 46.6Z M197.1 43.9L197.9 43.6L197.8 45.1L197.2 45Z M221.6 51.8L223.9 51.2L223.3 51.9L222.4 52.3Z M212.6 51.3L215.3 51.6L213.8 51.8L212.6 51.6Z M271.1 78.3L272.6 79.4L273.2 81.0L272.4 81.9L271.4 82.0L271 80Z M324.4 52.9L325.5 53.0L327.1 52.5L328.8 52.3L329.5 53.4L330.5 52.5L332.6 52.2L333.6 51.8L334.7 51.1L334.9 48.7L335.9 47.0L335.3 45.2L334 45.6L333.6 47.2L332.3 49.2L330.7 49.5L330.5 50.0L329.7 51.0L326.5 51.3L324.9 52.2Z M334.2 45.0L335.1 44.1L337.2 44.5L339.6 43.2L338.3 42.5L335.9 40.9L335.5 41.9L335.2 43.3L334.2 43.5L333.6 44.3Z M323.6 53.3L325.2 53.3L325.3 55.0L324.3 55.9L323.6 55.0L323.2 53.9Z M326 53.0L328.1 52.7L327.8 53.5L326.5 54.1L325.8 53.7Z M335.9 31.7L337 33.1L337.3 35.2L338 37.0L337 39.3L336.4 40.4L335.8 39.7L336 37.8L335.9 35.7L335.7 33.6Z M314.6 61.9L315.1 62.6L314 65.4L313.2 64.5L313.2 63.5L314 62.3Z M301.2 68.2L302.9 67.4L303.6 67.9L303 68.9L302.1 69.3L301.2 68.9Z M301.5 86.7L302.2 86.2L303.9 85.7L305.7 85.0L307 83.5L308.3 82.6L309.6 81.0L310.4 81.5L312.2 82.8L310.9 83.8L310.7 85.2L311.8 87.3L310.7 87.5L310.4 89.1L309.4 90.2L309 91.9L307.5 92.6L306.2 91.7L304.5 91.9L302.8 91.2L302.6 89.7L301.5 88.3Z M287.3 82.5L289.6 82.9L290.8 84.3L292.5 85.6L294 86.5L295.6 87.8L296.6 89.3L298.4 91.4L298.2 94.3L296.9 94.2L294.6 92.5L293.2 91.1L292.5 89.2L291.1 87.8L289.9 85.9L288.5 84.4Z M297.6 95.4L298.5 94.4L301 95.2L303.4 95.0L305.4 95.5L307.3 96.3L307.2 97.4L304.7 97.1L301.5 96.4L298.9 96Z M307.8 96.8L309.9 96.9L312 97.1L314 97.1L316.1 96.9L316.1 97.5L313 97.6L309.9 97.7L308 97.5Z M316.6 99.0L318.2 97.7L320.5 97.1L319.8 97.9L317.7 98.9Z M312.8 87.5L314 86.9L316.3 87.4L318.2 86.6L317.7 87.9L316.1 87.9L314 87.9L313.3 89.2L314.6 89.2L316.4 89.1L315.1 90.1L314.7 91.1L315.9 92.5L315.6 93.8L314.6 93.1L313.9 91.6L313.4 94.0L312.5 94.0L312.5 91.9L311.8 91.1L312.7 88.6Z M324.5 89.1L326 88.7L327.6 89.1L328.6 91.7L331.2 90.0L334.7 91.0L338.5 92.3L340.1 94.0L342 94.8L341.3 95.8L342.7 97.7L344.8 99.0L342.2 98.9L340.1 96.8L338 96.3L337 97.7L334.9 97.8L332.8 96.6L331.8 96.9L332.3 95.4L331.5 93.8L329.2 92.9L327.1 92.3L326.3 91.2L327.6 90.9L325.7 90.6Z M342.7 94.1L344.5 94.0L346.5 92.7L346.5 93.5L345.1 94.8L343.2 94.8Z M320.8 86.2L321.9 86.7L322.1 88.0L321.3 89.0L320.8 87.8Z M321.3 91.4L324.3 91.6L323.4 92.2L321.7 91.9Z M306.4 111.7L307 111.0L309.7 109.8L312 109.1L314 108.6L315.4 107.1L316.6 106.3L318.2 104.4L320.1 102.9L321.5 103.7L323.1 103.8L324.3 101.3L326 100.3L328.9 101.0L330.6 101.1L329.7 102.4L329.2 103.9L331.2 105.0L333.1 106.5L334.7 106.5L335.5 103.4L335.6 101.3L336.4 99.6L337.5 101.6L337.7 103.2L339.4 103.9L340.1 106.5L340.4 108.0L342.7 109.3L343.7 111.2L345.1 112.8L347.2 114.7L347.6 116.9L347.9 118.5L347.2 121.1L345.8 123.2L344.8 125.3L344.3 127.2L342.2 127.8L340.4 128.9L338.7 128.2L337.5 128.7L334.9 128.1L333.5 126.8L333.1 125.5L331.8 125.3L331.5 123.2L330.7 123.7L329.7 124.8L328.9 124.2L327.6 122.5L325.5 121.6L322.4 121.2L319.3 121.9L317.2 122.7L316.6 123.6L313 123.7L310.9 124.8L308.8 124.7L307.8 124.0L308.5 121.6L307.8 119.6L307 116.9L306.2 115.4L306.5 113.8Z M338.7 130.7L340.6 131.1L342.5 130.9L342.4 132.3L341.4 133.6L340.1 133.6L339.3 132.4Z M367.9 124.1L369.6 125.3L371.1 126.6L372.7 127.8L373.9 127.6L373.3 129.1L372.3 129.4L371.9 131.0L370.5 131.6L370.1 130.9L370.5 130.0L369 129.2L370.1 127.9L369.8 126.3L368.2 124.8Z M367.9 130.5L369.5 131.2L368.2 133.1L368 133.9L366.4 134.4L365.8 136.1L364.6 136.8L362.7 136.4L361.4 136.0L363.2 134.1L365.6 132.9L366.7 131.8Z M358.8 109.3L360.4 110.2L362 111.5L361.2 111.5L359.4 110.2Z M372.7 106.5L374 106.4L373.9 107.3L372.8 107.3Z M241.6 13.5L243.7 12.8L245.8 11.2L247.9 9.9L251.5 8.9L256.8 8.2L259.4 8.3L257.8 9.1L252.1 10.0L248.4 11.4L246.3 12.8L247.9 14.7L245.3 14.7L243.7 14.1Z M199.5 5.3L202.6 5.1L205.7 5.0L208.8 5.5L212 4.7L216.1 5.0L213 5.8L209.9 6.3L207.8 6.7L210.4 7.3L205.7 8.4L203.6 7.6L202.6 7.0L200 6.3Z M238 4.8L242.2 4.1L248.4 3.9L252.6 4.2L248.4 4.8L242.2 5Z M287 5.8L289 4.1L292.2 3.7L296.3 5.5L297.4 6.5L292.2 7.0L290.1 6.2Z M330.7 9.9L333.8 9.1L338 9.7L343.2 9.9L344.8 10.4L340.1 10.7L335.9 10.4L333.8 11.3L331.8 10.5Z M373.9 13.8L375.5 13.8L375.5 14.4L374.3 14.5Z M0.5 13.8L3.1 14.0L2.6 14.4L0.5 14.4Z M112 6.8L117.2 5.0L119.2 3.9L123.4 2.9L133.8 2.4L146.3 1.3L156.7 1.2L165.1 2.4L169.2 3.4L175.5 3.4L169.2 5.0L167.7 7.0L166.1 9.1L167.7 10.7L164.6 12.3L165.1 13.3L162.5 13.8L165.1 14.9L162 15.9L160.4 16.8L156.7 17.3L153.6 18.5L150.5 19.8L146.3 20.6L145.3 22.2L143.7 24.2L142.7 25.8L141.1 25.7L138 24.8L135.9 23.2L134.4 21.6L132.3 19.0L132.3 17.5L134.9 15.9L131.2 14.9L131.2 13.3L129.7 11.7L127.6 9.7L123.9 8.9L119.2 9.0L116.1 8.6L114 7.9Z M104.1 11.5L107.8 11.9L110.9 13.0L114 13.8L117.2 14.9L118.2 16.4L123.4 18.5L121.9 20.1L120.3 21.1L120.8 22.4L118.7 22.7L117.2 23.7L113.5 22.7L110.9 21.3L107.3 21.3L106.7 20.6L111.4 20.1L110.9 18.0L112 17.3L107.8 15.9L105.7 15.4L99.5 15.4L95.3 14.9L94.8 13.8L94.2 12.5L98.4 11.4L100 12.3Z M66.1 12.3L69.2 11.9L74.5 12.6L75.5 12.0L78.1 12.3L79.1 14.3L81.7 15.4L82.8 16.4L78.6 16.9L75.5 16.7L70.3 16.9L67.2 16.4L65.6 15.2L69.2 15.1L65.1 14.0L64 13.3Z M57.8 13.3L59.9 14.1L62.5 13.8L65.1 12.6L67.2 11.7L65.1 10.9L61.4 10.7L58.3 11.4Z M94.2 8.6L99.5 8.8L104.7 8.9L106.7 8.1L109.9 6.5L114 5.5L119.2 4.4L123.4 2.7L117.2 1.8L109.9 1.7L102.6 2.2L96.3 2.9L92.2 3.7L96.3 4.4L92.2 5.0L97.4 5.7L99.5 7.0L96.3 7.6Z M88 9.7L92.2 10.6L96.3 10.7L103.6 10.7L105.2 10.2L103.6 9.3L98.4 9.4L94.2 9.1L91.1 8.4L88 8.6Z M66.1 10.0L71.3 10.8L76.5 10.4L78.1 9.7L75.5 8.6L71.3 9.1L67.2 8.6Z M88 6.8L93.2 6.8L97.4 5.8L95.3 4.4L91.1 4.2L88 5Z M81.7 12.3L84.9 11.4L87 12.3L86.4 13.6L83.8 13.6Z M88.5 11.2L91.1 11.1L93.7 11.5L92.2 12.5L89 13Z M79.7 8.6L83.8 8.4L85.9 9.1L85.4 10.2L81.7 10.0L79.7 9.5Z M97.4 20.1L100.5 19.5L103.6 21.6L104.1 22.4L100.5 22.9L97.4 21.9Z M126.2 38.6L128.6 35.3L130 34.7L130 36.2L132.3 37.3L133.1 38.8L132.3 39.7L130.2 39.4L129.1 38.8Z M54.3 35.4L57.3 36.0L59.4 37.8L57.8 37.7L55.7 36.5Z M49.5 31.9L50.8 32.0L51.3 33.9L50.2 33.3Z M99.6 65.5L101.5 64.3L104.1 64.2L107.3 65.6L109.4 66.5L110.7 67.3L107.3 67.6L106.7 66.7L105.2 65.8L102.6 65.0L101 65.4Z M110.5 69.1L112 69.3L113.5 69.9L115.1 69.2L116.7 68.9L115.3 68.2L113.5 67.6L111.6 67.6L112.2 68.5L110.5 68.8Z M106.4 69.1L108.5 69.4L107.8 69.8L106.5 69.4Z M118 69.0L119.7 69.1L119.5 69.5L118 69.5Z M106.2 60.5L107.6 60.7L107.6 61.2L106.7 63.0L106.4 62.3Z M123.5 77.2L124.6 77.0L124.5 77.8L123.5 77.8Z M124.5 141.7L127.1 141.7L127.8 142.2L126 142.8L124.5 142.5Z M243.5 75.2L244.8 75.2L244.5 75.5L243.6 75.5Z M340.1 41.9L342.7 40.8L344.8 40.1L346.3 39.1L348.4 37.3L350 35.9L350.3 36.2L347.4 38.7L344.3 40.7L341.1 41.8Z M349 94.0L350.3 94.9L350.4 95.5L349.5 95.1Z M351 95.4L352.1 95.9L354.5 97.1L354.3 97.3L351.9 96.2Z M354.4 98.0L355.5 98.2L355.3 98.6L354.4 98.4Z M355.4 96.9L356 98.0L355.8 98.3L355.3 97.3Z M356 98.9L357.1 99.3L356.9 99.7L356 99.2Z M361.5 103.6L362.2 104.2L362.1 104.8L361.5 104.3Z M362.2 105.0L362.9 105.4L362.6 105.7Z M345.1 91.1L346.3 91.7L347.5 93.0L347.1 93.0L345.8 91.7Z M319.5 53.4L320.2 53.4L319.9 53.7Z M228.8 94.3L229.3 94.7L229 95.1Z M0.5 176.3L8.8 173.7L17.2 169.9L23.4 168.7L31.7 168.8L35.9 166.9L42.2 166.4L52.6 165.7L63 165.4L71.3 165.9L80.7 165.4L82.8 163.8L89 164.3L96.3 164.3L104.7 164.7L109.9 163.8L115.1 163.8L117.2 161.7L118.2 159.1L119.8 157.1L122.9 155.5L127.1 154.1L128.6 154.4L126.5 155.5L123.9 157.1L121.3 159.1L123.4 161.2L124.5 163.8L125 166.4L120.3 169.0L127.6 169.6L141.1 169.8L151.5 169.6L156.7 168.0L162 166.4L169.2 164.3L175.5 162.8L179.7 162.3L185.9 161.7L193.2 161.4L200.5 161.2L208.8 161.4L216.1 161.2L222.4 160.2L227.6 161.0L229.7 160.0L235.9 158.6L240.1 157.6L244.3 157.1L247.4 157.9L252.6 158.6L258.8 158.9L260.9 159.7L264 160.7L269.3 159.7L273.4 158.1L279.7 157.6L287 157.1L292.2 156.8L297.4 157.6L302.6 157.1L307.8 157.4L313 157.8L318.2 157.4L323.4 157.1L328.6 156.8L333.8 157.8L339 158.1L344.3 159.4L349.5 160.2L354.7 161.2L357.8 162.3L362 164.3L365.1 168.0L369.3 172.7L375.5 176.3L375.5 183.1L0.5 183.1Z" fill="#ede6f6" stroke="#c3bdcc" stroke-width=".45" stroke-linejoin="round"/><path d="M41.1 15.8L41.1 25.5 M92 73.1L93.2 71.6L93.7 69.8L95.1 69.8L96 69 M95.1 69.8L95.1 71.7L96 71.9 M92 73.1L94.9 73.3L96.5 74.3 M94.9 73.3L95.8 72.2 M97 74.8L98.4 73.7L101.2 72.7 M98.7 76.7L100.8 76.9 M101.6 79.8L102 78.4 M107.4 79.3L107.8 80.2 M113.5 75.6L112.5 78.4L115.1 81.0L117.7 81.8L118.2 86.2L115.1 87.8L115.1 92.7 M118.2 86.2L120.8 84.1L124.8 82.9L125.5 79.5 M124.8 82.9L125.7 83.7L126.7 86.9L129.1 86.2L131.2 85.9L133.8 86.0L134.2 83.9 M127.6 81.3L128.3 82.9L126.7 86.9 M131.2 82.3L131.2 85.9 M105.8 86.7L109.4 88.3L109.7 89.3 M115.1 92.7L112 93.5L110.9 96.1L112.5 98.4L114.6 98.2L114.6 99.8L116.1 99.8 M104.5 91.8L105.7 93.5L109.7 89.3 M116.1 99.8L120 98.7L120.3 100.8L125 102.6L125.5 105.3L127.3 105.3L127.9 108.1L127.4 109.3 M116.1 99.8L116.1 105.5L115.6 106.5L114.7 107.4 M115.6 106.5L117.2 111.2L118.2 112.3L116.6 113.8L116.6 116.4L115.1 119.6L115.1 123.7L114 127.9L113.2 134.1L112.5 139.3L113 142.3L116.7 142.9 M118.2 112.3L120.3 111.2L122.8 111.4L127.4 109.3 M122.8 111.4L123.9 108.6L127.4 109.3L127.8 111.4L130 111.5L131.4 113.3L131.1 115 M122.8 111.4L128 114.8L127 116.6L129.9 116.8L131.1 115 M129.9 116.8L128 119.8L127.2 123.7 M128 119.8L130.2 120.4L132.5 123.4 M116.5 143.2L116.5 145.5 M185.9 51.7L186.7 54.7L184.4 56.0L178.9 58.4L178.9 59.7 M174.5 59.4L178.9 59.4L178.9 61.2L175.5 61.2L175.5 63.8L174.5 64.3L174.5 66.1L170.3 66.1 M178.9 59.9L183 62.3L189.3 66.4L191.3 68.5L192.4 68.3L192.4 70.8 M196.9 49.9L196.5 53.9L197.9 56.7 M200 53.7L198.7 55.2L197.9 56.7L198.4 62.8L200.5 63.8 M200.5 63.8L195.8 66.6L192.4 68.3 M200.5 63.8L202.8 64.8L204.6 63.9L213 68.0L213 67.5 M214 55.4L214 65.4L226.5 65.4 M214 65.4L213 67.5L213 71.9L211.4 72.7L210.9 75.1L211.8 76.8L213 79.2L216.5 82.9 M204.6 63.9L203.6 66.4L204.1 70.8L202.1 73.2L202.1 74 M175.5 63.8L175.5 64 M178.9 59.9L181.7 62.4L181.2 66.4L182.3 72.2L176 72.2L175.3 73.0L170.8 71.4 M182.3 72.2L183.8 71.1L186.4 72.5L188.2 72.7L189.3 66.4 M188.2 72.7L191.6 72.3L192.4 70.8L192.4 68.3 M191.6 72.3L191.8 76.1L190.9 81.6 M191.8 76.1L192.7 74.0L195.3 74.8L197.9 75.0L202.1 74.0L202.8 75.3L203.6 77.9L201.9 80.5L197 83.3 M202.1 73.2L204.1 70.8 M202.8 75.3L204.1 75.8L203.6 77.9 M203.6 77.9L204.1 80.5L203.1 83.1L204.7 86.0L201.9 86.0L199.8 86.0L198.2 85.9 M204.1 80.5L207.4 80.0L211.8 76.8 M207.4 80.0L207.4 84.7L204.7 86 M207.4 84.7L211.4 84.0L214.4 82.9L216.5 82.9L220.1 84.7 M170.6 75.4L173.7 75.2L176.1 75.4L176.1 72.4 M172.4 76.8L173.7 75.2 M174.1 78.9L177.3 79.4L176.9 80.5L176 81.1 M177.3 79.4L179.5 80.4L180.2 83.7 M179.5 80.4L179.7 77.7L182.3 77.5L185.1 78.4L184.8 83 M182.3 77.5L182.3 76.3L183.6 74.8 M185.1 78.4L185.1 76.8L188 76.7L189.3 81.9 M188 76.7L188.9 76.8L189.7 81.8 M188.9 76.8L190.4 75.5L191.8 76.1 M199.8 86.0L199.8 87.3L198.2 87.3 M201.9 86.0L203 89.3L203 93.0L199.6 92.4 M207.4 84.7L206.4 88.8L204.9 90.6L204.7 93.3L201.5 93.2L200.7 94.3 M201.8 94.4L205.3 94.4L206.2 96.7L208.3 95.6L210.7 95.9L210.9 99.8L213 99.8L212.9 101.6 M220.1 84.7L223.4 83.9L225.4 83.5L225.5 83.7L230.7 84.1L231.8 83.9L234.9 83.1L238 80.0L233 76.3 M223.4 83.9L222.4 80.2L223.4 78.4L223.6 77.0L222.6 75.6L222.4 77.4L213 79.2 M223.6 77.0L226 73.4L227.5 70.1L228.1 69.5 M226 73.4L229.7 73.2L232.2 75.3L232.9 75.1 M232.2 75.3L231.5 76.8L233 76.3 M231.5 76.8L232.8 78.6L234.9 83.1 M230.7 84.1L230.7 90.1 M223.4 83.9L224.5 86.5L223.4 88.3L223.4 89.3L227.2 91.4L228.8 93.2 M223.4 89.3L219.8 89.3L218.8 89.8L218.4 91.2L220.1 90.8L219.8 89.3 M218.8 89.8L218.8 87.5L220.5 86.0L220.1 84.7 M218.4 91.2L218.6 92.9L220.1 90.8 M218.6 92.9L218.8 95.0L220.1 96.9L222.3 98.1L223.4 98.2L224.3 100.3L227.1 100.5L230.1 99.2 M220.1 96.9L217.7 97.2L217.6 98.0L217.8 100.8L219 102.3L218.2 102.3L216.3 100.6L213 99.8 M222.3 98.1L222.7 101.3L222.4 102.9L219.6 103.9L219.7 104.6 M224.3 100.3L223.7 103.3L225.3 105.1L224.7 106.1L223.8 105.3L222.4 102.9 M212.9 101.6L210.9 101.8L210.9 105.2L212.4 106.6L214.4 106.8L216.1 106.9L218.1 104.9L219.7 104.6L222.3 105.7L222.3 109.1L220.6 111.6L218.6 111.4L216.1 112.9L214.4 115.1L212 114.7L209.7 116.2L208.8 114.1L208.8 111.2L209.9 111.2L209.9 107.4L212.4 106.6 M200.3 106.3L202.6 106.4L207.2 106.4L209.9 106.9L214.4 106.8 M214.4 106.8L214.3 108.4L216.9 110.3L218.6 111.4 M220.6 111.6L221.2 113.7L221.3 116.2L222.3 116.2 M205.2 118.1L208.8 117.9L208.8 114.1 M221.2 115.4L220.1 116.2L220.5 116.7L221.3 116.2 M216.1 119.1L217.8 118.1L218.6 119.1L217.4 120.2 M178.8 44.7L181.2 44.8L180.7 47.2L180.2 49.5 M186.1 43.2L188.7 43.8L191.3 44.1 M195.8 42.7L195.3 40.5L194.5 40.1L195.9 38.7L196.5 37.3L194.7 36.7L194 36.6L192.4 36.2L190.7 35.1 M195.3 40.5L198.9 39.5L200.7 39.3L202.3 39.9L202.2 40.7 M195.9 38.7L198 38.8L198.9 39.5 M198 38.8L201.5 38.8L202.4 37.5L200.7 35.9L203.4 35.2L203.6 32 M194 36.6L194.3 35.2L195.5 32.8 M191.5 34.8L194.3 35.2 M202.4 37.5L205.6 37.7L205.9 38.3L204.9 39.4L202.3 39.9 M203.4 35.2L205.6 35.8L207.6 36.7L211.4 37.2L211.1 37.9L207.6 38.5L205.9 38.3 M205.6 37.7L207.6 36.7 M211.4 37.2L213 35.4L212.6 33.5L212.5 32.0L211.8 31.6L208.6 31.6 M211.8 31.6L210.1 30.8 M212.5 32.0L214.9 31.1L215.7 30.3L217.4 29.8L216.9 28.5L216.5 28.4L217.4 26.4 M209.9 29.9L214 29.5L215.7 30.3 M213.3 28.0L216.5 28.4 M217.4 29.8L220.2 30.4L221.3 32.3L220.5 34.0L212.6 34.5 M220.5 34.0L223.8 34.3L225.1 35.8L229.8 36.6L229.5 38.4L227.8 39.2 M211.1 37.9L213.9 38.6L215.7 38.0L217.4 40.9L218.8 41 M215.7 38.0L218.3 38.4L219.4 40 M211.1 37.9L209.1 40.2L207.6 40.5L204.9 39.4 M209.1 40.2L211.6 41.9L217.8 42.8 M211.6 41.9L211.3 44.2L215.5 44.9L217.2 44.5 M211.3 44.2L209.8 45.7L208.8 46.9 M215.5 44.9L215.7 45.3L215.1 45.8 M202.2 40.9L203.9 40.9L205.1 39.9 M207.6 40.5L208.2 41.5L208.4 44.0L208.2 44.7 M204.5 41.2L207.8 41.5L208.2 41.5 M209.8 45.7L209.5 44.5L208.4 44 M197 31.1L198.3 31.2 M200.6 25.6L200.8 24.2L200.7 22.7L202.6 21.4L203.1 19.5L205.2 17.7L207.1 16.9L209.4 16.3L212.7 16.6L213.8 16.8L215.1 15.6L218.1 16.3L220.1 15.8 M199.9 26.9L200.6 25.6 M209.4 16.3L212.7 17.6L213 19.7 M218.1 16.3L218.2 18.6L219.3 21.8L220.8 22.8L217.1 25.3 M225.7 50.1L227.6 50.0L232.2 49.5L234.7 49.5L233.8 47.3L234.7 46.9L233.3 45.5L231.3 45.1 M234.7 46.9L236.4 47.8L238 46.9L238.9 48.3 M233.3 45.5L236.4 44.7L237.8 45.4L238.6 44.8 M229.7 43.1L233.6 43.9L236.4 44.7 M236.4 47.8L234.9 47.4L236.4 45.6L234.9 45.3L233.3 45.5 M225.1 53.6L225.5 54.2L225 54.5L225 55.5L224.5 57.5 M223.6 55.7L224.4 57.6 M225.5 54.2L228.4 53.5L230.7 52.5L232.2 49.5 M228.4 53.5L228.8 54.8L226.5 55.5L227.6 56.5L225.5 57.9L224.4 57.7 M228.8 54.8L231.9 55.9L234.6 57.9L236.4 58.0L237.7 57.0L238.5 57 M234.7 49.5L235.9 51.0L235.3 52.9L237.7 56.0L238.5 57 M236.4 58.0L237.5 58.6L238.4 58.6 M241.1 62.7L241.8 63.1 M242.8 64.4L245.5 64.7L246 63.3L246.4 62.5L246.6 61.6 M245.5 64.7L245.3 67.5L242.2 68.5L243.3 70.9 M242.2 68.5L238.2 69.3L236.3 70.4L233.2 70.1L232.6 71.2 M238.9 48.3L244.1 49.4L246.5 48.6L251 50.2L251.8 51.2L251 53.2L251.5 55.5L253.1 57.7L252.3 62 M243.2 44.5L246.3 45.3L247.4 45.3L249 43.7L250.5 44.3L252.6 43.0L255.6 42.8L256.9 43.5L257.3 44.7L258.8 45.6L259.9 45.2L262 44.2L264.6 44.1L265.9 43.5L271.5 44.3 M246.3 41.4L246.3 45.3 M246.3 41.4L249 40.8L251.5 42.0L252.6 43 M246.5 48.6L249 43.7 M251 50.2L253.1 51.5L255.2 50.5L257.3 49.3L258.8 49.8L260.4 49.1L262.5 50.0L266 49.5L264.7 47.3L261.5 47.0L260.2 45.8L258.8 45.6 M257.3 49.3L257.4 48.7L254.9 47.7L252.9 46.6L251.5 45.4L250.5 44.3 M258.8 49.8L258.6 47.2L261.5 47 M264.7 47.3L262 46.4L264.6 44.1 M264.7 47.3L271.5 44.3L271.5 41.4L273.9 41.2L277.1 39.3L277.4 37.9L278.9 37.2 M237 38.3L236.4 36.4L238.4 36.2L240.9 34.4L245.3 35.5L248.9 35.2L252.1 35.4L252.1 32.6L255.7 31.6L259.9 30.7L262 31.9L264.6 32.0L268.1 31.6L271.3 35.4L275 35.2L277.1 36.6L278.9 37.2 M239 40.1L237 38.3 M278.9 37.2L283.8 35.4L290.1 36.2L290.4 34.1L294.5 35.7L299.5 36.5L304.1 36.9L309.6 36.4L312.9 39.7L308.8 40.7L304.6 42.8L297.4 45.0L288.4 43.8L282.8 41.2L279.5 37 M309.6 36.4L313 34.7L313.5 32.8L319.3 33.1L324.2 37.4L328.6 37.9L326.5 41.4L324.8 42.5L324.2 44.2 M324.2 44.2L321.3 44.5L320.2 44.8L317.6 46.6 M320 48.8L321.8 48.1 M266 49.5L269.3 51.3L270.3 54.4L270 55.9L272.4 56.8L271.4 58.3L273.4 59.2L279.8 60.8L279.8 59.2L276.5 58.8L272.4 56.8 M251.5 55.5L253.1 57.7L257.1 57.2L260.2 55.1L262 52.9L262.5 50 M266 49.5L265.1 52.9L266.4 54.7L265.6 56.0L262.9 59.2L260.4 60.0L262 62.9L259 63.6 M279.8 59.2L280.5 59.9L281.5 58.9L283.5 59.3L283.8 60.3L281.5 60.5L280.5 59.9 M283.5 59.3L289 58.8L289.5 59.2 M279.8 60.8L280.5 60.9L279.8 62.3L280.7 65.2 M280.5 60.9L281.5 61.0L284 62.3L283 63.6L284.1 64.3L284.1 66.4 M284.1 64.3L285.2 63.3L286.6 61.9L289 60.0L289.5 59.2L290.8 59.5L290.7 63.2L291.3 65.3L293.4 65.9L292.3 67.2 M293.4 65.9L294.4 65.0L296.2 64.9L299.1 64.4L300.5 65.8 M292.3 67.2L291 67.7L289.9 69.0L290.6 71.3L290.3 72.6L291.3 74.5L291.8 76.0L290.9 77.7 M292.3 67.2L293.3 70.1L294.4 69.3L296.3 69.2L297.2 71.1L298 73.3L300 73.2L300 72.4L296.8 67.8L296.2 64.9 M295.2 76.1L294.9 74.1L296.3 73.3L298 73.3 M300 73.2L298.8 76.1L296.8 77.5 M292.3 81.6L294 82.3L294.4 81.8 M302.2 86.2L303.1 87.4L305.7 86.8L307.8 85.4L308.4 83.8L310.1 83.8 M334.9 91.0L334.9 97.8 M317.3 98.1L318.3 97.9" fill="none" stroke="#beb8c8" stroke-width=".5" stroke-linejoin="round" stroke-linecap="round"/><path d="M239 40.1L241.1 39.3L243.2 39.7L242.7 41.1L241.1 41.6L240.4 42.2L241.6 43.3L242.7 44.0L242.7 45.4L244 45.8L243.7 47.7L244.3 49.4L242.2 50.0L240.4 49.4L239 48.7L239.4 47.2L240.3 46.3L239 45.1L237.5 43.5L237 41.6Z" fill="#ffffff" stroke="#c3bdcc" stroke-width=".4"/><path d="M58.1 37.9L60.4 38.8L60.1 37.3L88.8 37.3L89.5 37.6L92.2 38.0L94.8 38.3L95.9 38.0L99.7 39.8L101 40.4L102.1 41.1L102.2 43.5L101.5 44.5L103.6 44.2L105.7 43.7L105.7 43.1L108.3 42.8L109.9 41.4L113.5 41.4L114.8 40.5L115.9 38.9L117.4 39.2L117.4 40.7L118.2 41.4L116.1 42.3L114.6 43.2L114.2 44.5L115.1 44.9L113.5 45.2L110.9 46.0L110.6 47.2L109.4 48.7L108.8 49.8L109 51.3L107.8 52.4L106.2 53.1L103.8 54.8L103.2 56.5L104.1 59.1L104.7 60.7L104.1 62.0L102.8 61.2L101.7 59.3L101.9 58.1L100.5 57.0L98.9 57.3L97.4 56.6L95.3 56.7L95 57.9L93.2 57.8L90.3 57.4L89 57.9L86.7 59.3L86.7 61.3L84.6 60.2L83.5 58.6L82.5 57.4L80.9 57.9L79.1 57.5L77.1 55.2L75.3 55.2L75.3 55.7L72.4 55.7L68.4 54.4L66 54.4L64.6 52.9L62.5 52.4L61.1 50.3L60.4 48.9L59 47.2L58.5 46.2L58.6 44.0L58.8 40.2Z M13 20.1L15.1 17.2L19.2 15.2L25 14.0L31.7 14.9L41.1 15.8L41.1 25.5L43.2 25.7L44.8 26.9L47.1 26.1L48.9 27.3L50.5 28.9L52.6 30.0L52.4 31.2L51 30.0L48.9 28.1L46.8 27.4L44.8 27.2L42.2 26.0L38 25.7L35.9 24.9L33.3 25.3L32.3 26.1L30.2 26.5L31.2 24.8L29.1 25.3L28.1 26.5L27.1 27.9L25 28.9L22.9 30.0L20.3 30.7L16.6 31.5L18.7 30.2L21.3 29.4L23.9 27.9L24.1 27.0L22.4 27.4L19.5 27.2L19.2 25.8L16.6 25.3L15.6 24.2L16.6 22.7L20.3 22.0L20.3 21.1L18.2 21.0L14.6 21Z M25.5 67.3L26.5 67.7L26 68.5L25.5 68Z M23.2 65.8L23.7 66.0L25.2 66.5L24.8 66.7L23.3 66.1Z M27.1 28.4L29.1 27.9L29.3 28.6L27.8 29.1Z M12.5 32.6L14.6 32.0L16.3 31.5L15.1 32.4L12.5 33.1Z M9 22.3L12 22.5L11.4 22.8L9.3 22.6Z M13.8 25.6L15.3 25.5L15.3 26.0L14 26Z" fill="#cdb5ea" stroke="#bfa8dc" stroke-width=".35" stroke-linejoin="round"/><path d="M313.6 69.0L315.3 69.0L315.3 70.6L314.7 71.6L315.1 73.4L316.4 73.8L317.3 75.2L316.4 74.9L315.6 73.9L314.4 74.1L313.7 73.4L313.9 72.9L313.1 72.7L312.9 71.4L313.4 71.1Z M315.1 81.0L315.4 80.0L316.6 79.2L317.9 79.4L318.7 78.1L319.7 79.4L319.7 81.0L319.3 81.7L318.6 82.4L318.4 81.2L317.4 81.7L317.3 80.7L316.3 80.5Z M317.5 75.3L318.5 75.3L318.8 76.6L318.4 77.7L318 77.7L318 76.5L317.5 76.3Z M315.1 76.0L316.2 76.3L316.5 77.4L316.2 78.8L315.5 78.2L315.7 77.4L315.1 77.4Z M310.1 79.5L311.1 78.6L312.4 77.4L312.5 76.5L311.8 77.7L310.6 78.9Z M313.4 74.3L314.4 74.4L314.6 75.4L314.1 75.6L313.8 75Z" fill="#cfb8eb" stroke="#c3addf" stroke-width=".3" stroke-linejoin="round"/></svg>
<div class="a" style="left:222.300px;top:440px;width:12.400px;height:8.200px;border-radius:4.100px;background:#fff"></div>
<svg style="left:223.200px;top:440.800px" width="6.600" height="6.600" viewBox="0 0 10 10"><defs><clipPath id="fc"><circle cx="5" cy="5" r="5"/></clipPath></defs><g clip-path="url(#fc)"><rect width="10" height="10" fill="#e8838f"/><path d="M0 1.500h10M0 3.500h10M0 5.500h10M0 7.500h10M0 9.500h10" stroke="#f7e3e5" stroke-width=".8"/><rect width="5.500" height="5" fill="#2a3f7d"/></g></svg>
<div class="t" id="pin1" style="left:230.37px;top:442.43px;font-size:5.4px;color:#333">1</div>
<div class="a" style="left:468px;top:475.400px;width:13.200px;height:8.200px;border-radius:4.100px;background:#fff"></div>
<svg style="left:468.900px;top:476.100px" width="6.800" height="6.800" viewBox="0 0 10 10"><defs><clipPath id="fp"><circle cx="5" cy="5" r="5"/></clipPath></defs><g clip-path="url(#fp)"><rect width="10" height="5" fill="#1c3fa0"/><rect y="5" width="10" height="5" fill="#d62a36"/><path d="M0 0L6 5 0 10z" fill="#fff"/><circle cx="2" cy="5" r=".9" fill="#f5c518"/></g></svg>
<div class="t" id="pin2" style="left:476.87px;top:477.43px;font-size:5.4px;color:#333">1</div>
<div class="a" style="left:172px;top:477px;width:168px;height:67px;border:2px solid #f98535"></div>
<div class="a" style="left:174.300px;top:480.200px;width:162.700px;height:60.500px;border-radius:8.500px;background:rgba(32,32,32,.97)"></div>
<div class="t" id="nv" style="left:180.44px;top:488.52px;font-size:10.13px;color:#fff;font-weight:700;letter-spacing:-0.321px">New visitor</div>
<div class="t" id="nvd" style="left:233.81px;top:488.98px;font-size:9px;color:#eee;font-weight:700">·</div>
<div class="t" id="nv2" style="left:239.00px;top:489.53px;font-size:8.12px;color:#f0f0f0;-webkit-text-stroke:0.19px #f0f0f0;letter-spacing:-0.071px;-webkit-text-stroke:.3px #f0f0f0">Visited 1 Pages</div>
<div class="a" style="left:180.8px;top:504.3px;width:66.2px;height:14.6px;border-radius:2.500px;background:#2b2b2b"></div>
<div class="a" style="left:248.5px;top:504.3px;width:82.5px;height:14.6px;border-radius:2.500px;background:#2b2b2b"></div>
<div class="a" style="left:180.8px;top:520.9px;width:48.2px;height:14.6px;border-radius:2.500px;background:#2b2b2b"></div>
<div class="a" style="left:230.8px;top:520.9px;width:51.6px;height:14.6px;border-radius:2.500px;background:#2b2b2b"></div>
<div class="a" style="left:284.2px;top:520.9px;width:46.8px;height:14.6px;border-radius:2.500px;background:#2b2b2b"></div>
<svg style="left:183.700px;top:507.600px" width="8.400" height="8.400" viewBox="0 0 10 10"><defs><clipPath id="fu"><circle cx="5" cy="5" r="5"/></clipPath></defs><g clip-path="url(#fu)"><rect width="10" height="10" fill="#e98c97"/><path d="M0 1.400h10M0 3.300h10M0 5.200h10M0 7.100h10M0 9h10" stroke="#f8e6e8" stroke-width=".75"/><rect width="5.600" height="5" fill="#3a4f8e"/></g></svg>
<div class="t" id="tus" style="left:195.49px;top:507.66px;font-size:8.55px;color:#fff;-webkit-text-stroke:0.21px #fff;letter-spacing:-0.163px">United States</div>
<div class="t" id="tdt" style="left:251.93px;top:507.65px;font-size:8.56px;color:#fff;-webkit-text-stroke:0.21px #fff;letter-spacing:-0.141px">04/04/2026, 1:52 PM</div>
<svg style="left:183px;top:524.500px" width="9.800" height="8" viewBox="0 0 9.800 8" fill="none" stroke="#8c8c8c" stroke-width=".9"><rect x=".5" y=".5" width="8.800" height="5.600" rx="1.200" fill="#3a3a3a"/><path d="M3 7.500h3.800" stroke-linecap="round" stroke-width="1"/></svg>
<div class="t" id="tde" style="left:195.30px;top:524.11px;font-size:8.61px;color:#fff;-webkit-text-stroke:0.21px #fff;letter-spacing:-0.127px">Desktop</div>
<svg style="left:233.600px;top:523.900px" width="9.300" height="9.300" viewBox="0 0 10 10"><rect x=".2" y=".2" width="4.500" height="4.500" rx=".5" fill="#f25022"/><rect x="5.300" y=".2" width="4.500" height="4.500" rx=".5" fill="#7fba00"/><rect x=".2" y="5.300" width="4.500" height="4.500" rx=".5" fill="#00a4ef"/><rect x="5.300" y="5.300" width="4.500" height="4.500" rx=".5" fill="#ffb900"/></svg>
<div class="t" id="twi" style="left:246.50px;top:524.18px;font-size:8.53px;color:#fff;-webkit-text-stroke:0.20px #fff;letter-spacing:-0.305px">Windows</div>
<svg style="left:286.300px;top:523.600px" width="9.600" height="9.600" viewBox="0 0 10 10"><path d="M5 5L.67 2.500A5 5 0 0 1 9.330 2.500z" fill="#e33b2e"/><path d="M5 5L9.330 2.500A5 5 0 0 1 5 10z" fill="#fbc116"/><path d="M5 5L5 10A5 5 0 0 1 .67 2.500z" fill="#2da94f"/><circle cx="5" cy="5" r="2.300" fill="#fff"/><circle cx="5" cy="5" r="1.800" fill="#4285f4"/></svg>
<div class="t" id="tch" style="left:298.81px;top:524.21px;font-size:8.49px;color:#fff;-webkit-text-stroke:0.20px #fff;letter-spacing:-0.377px">Chrome</div>
<div class="a" style="left:568.400px;top:546.600px;width:30.100px;height:30.100px;border-radius:7px;background:#f7f7f7"></div>
<svg style="left:576.7px;top:555.2px" width="12.8" height="12.8" viewBox="0 0 24 24" fill="none" stroke="#2a2a2a" stroke-width="2" stroke-linecap="round" stroke-linejoin="round"><path d="M20.500 13.500A8.500 8.500 0 1 1 12 4.500h2.500"/><path d="M11.500 1l3.500 3.500-3.500 3.500"/></svg>
<div class="a" style="left:81.300px;top:581.900px;width:517.200px;height:30.200px;border-radius:9px;background:#f7f7f7"></div>
<div class="t" id="vtm" style="left:301.50px;top:590.94px;font-size:10.82px;color:#222;-webkit-text-stroke:0.26px #222;letter-spacing:-0.129px">View Traffic Map</div>
</body>
</html>
